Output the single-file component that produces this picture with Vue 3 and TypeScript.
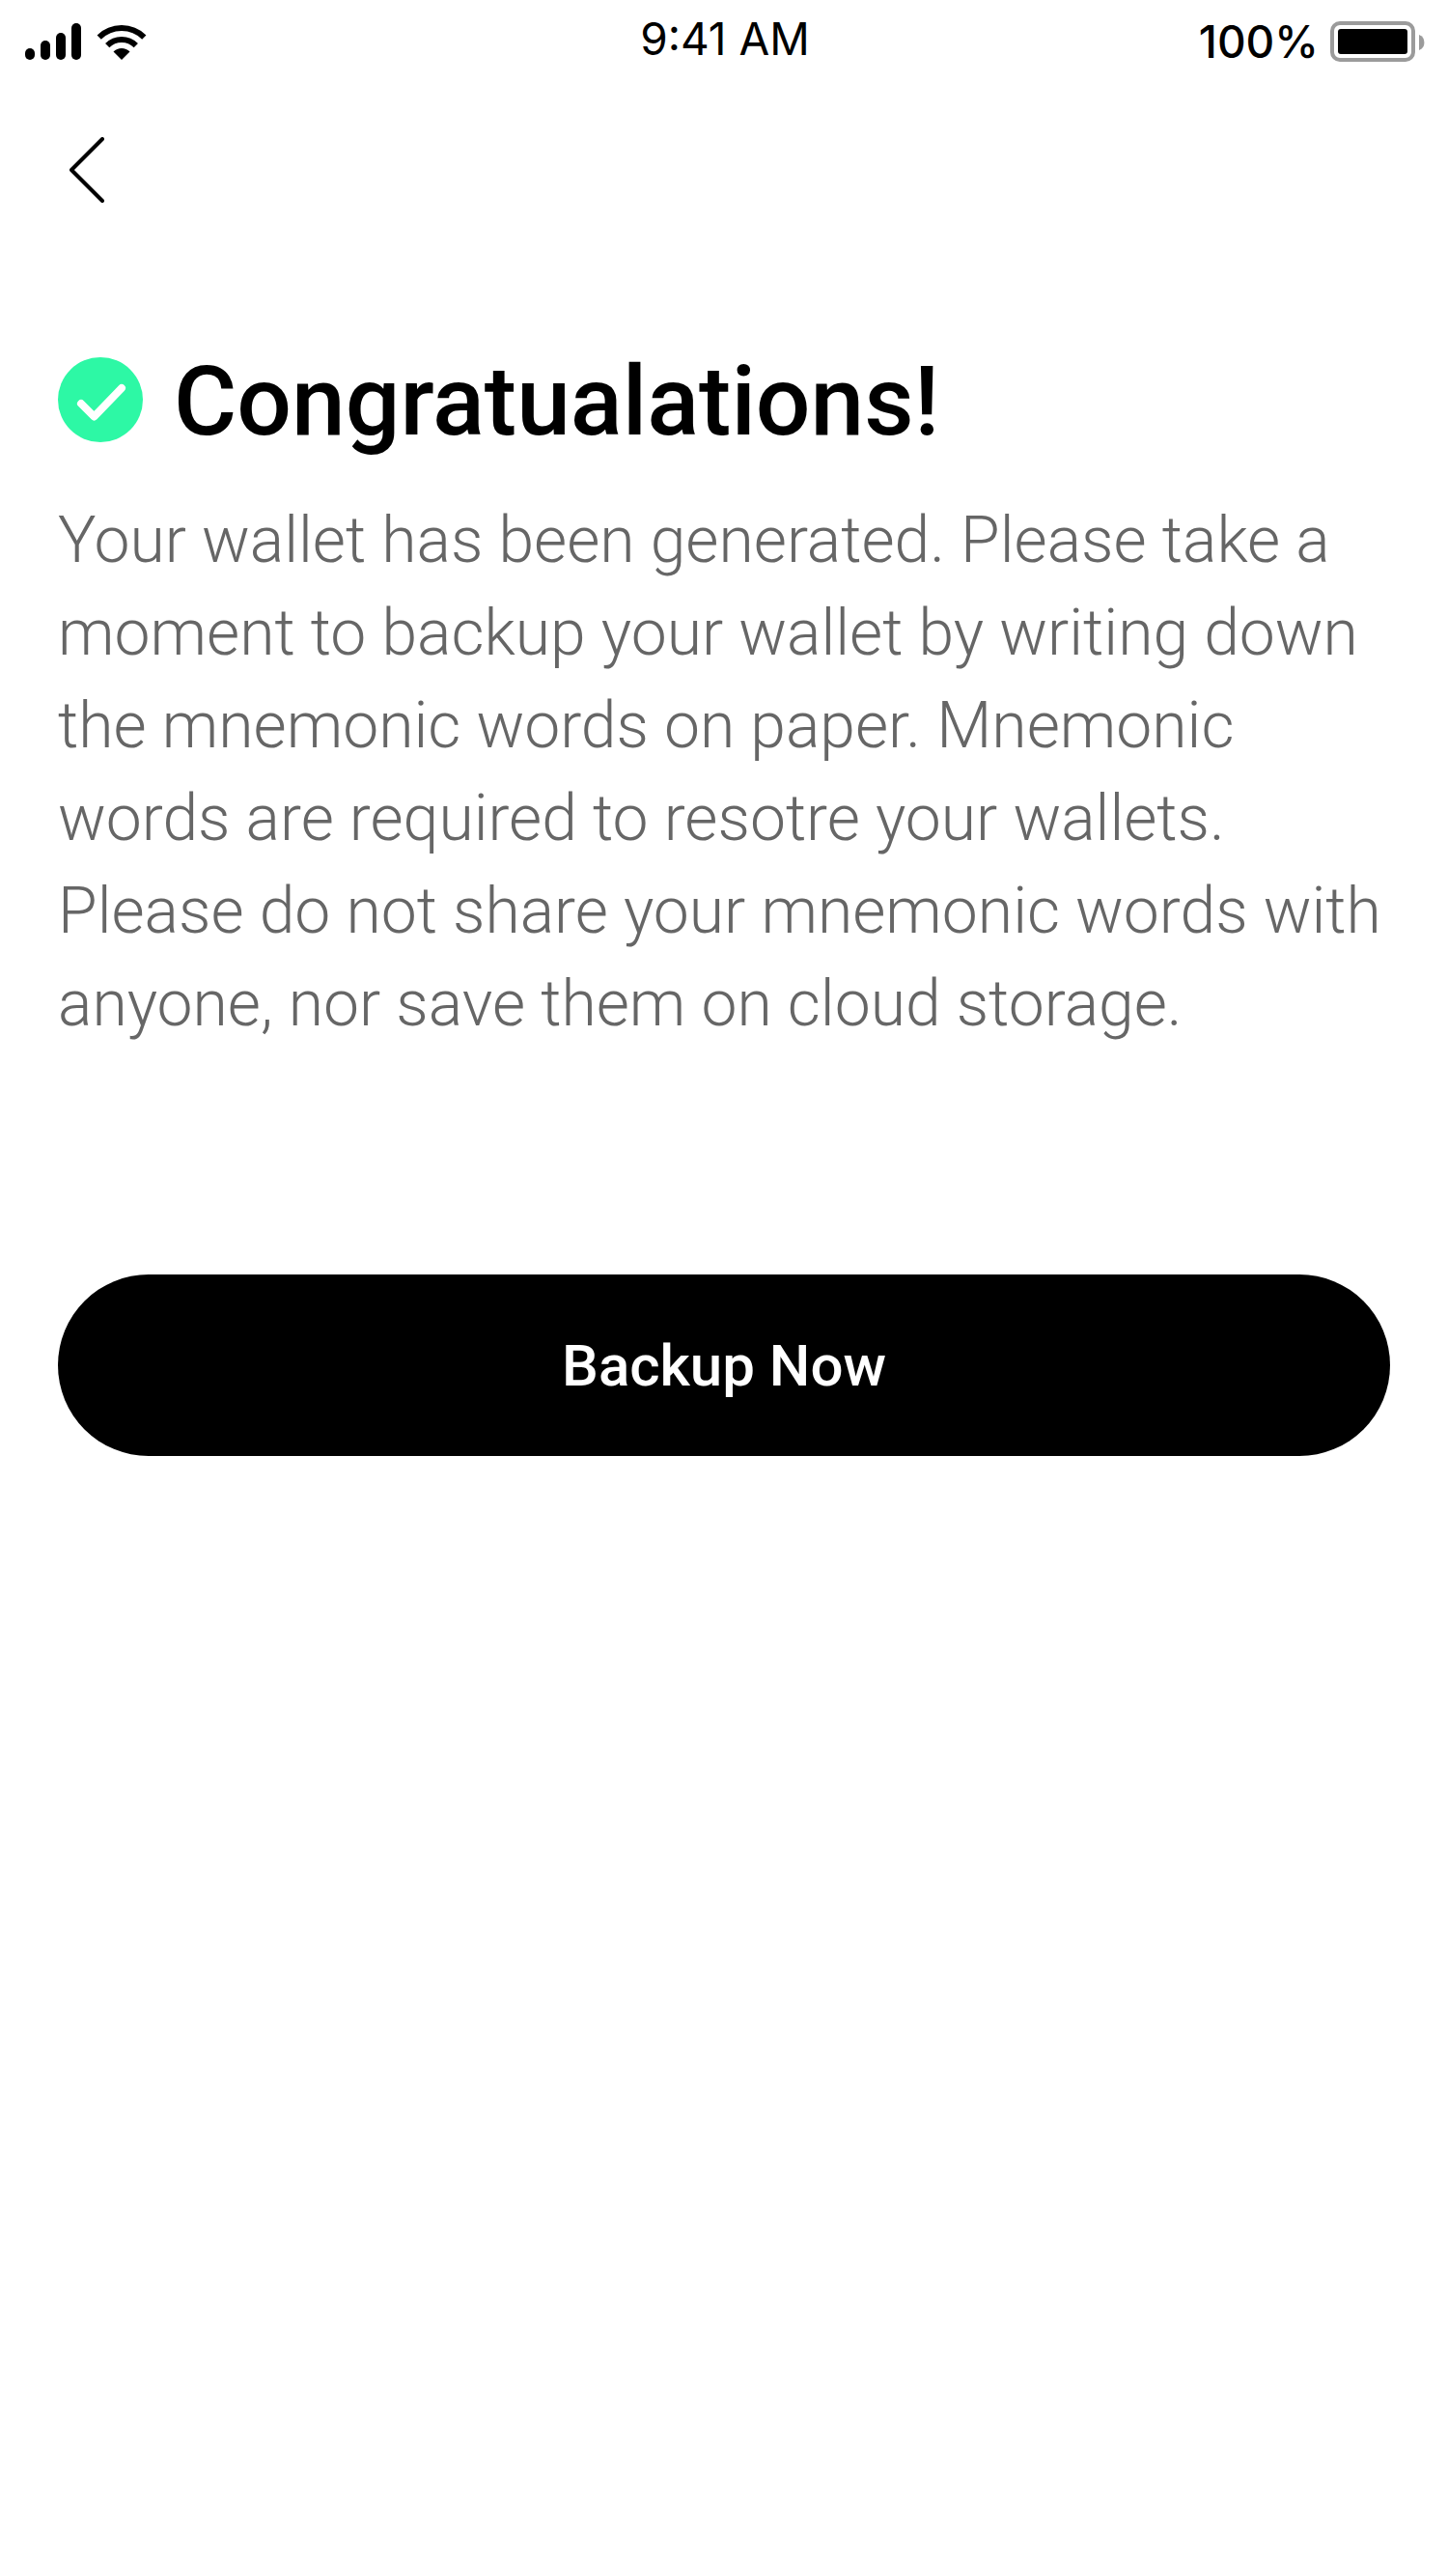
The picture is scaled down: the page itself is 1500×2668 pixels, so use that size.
<script setup lang="ts">
interface Bar {
  x: number
  top: number
}

const time = '9:41 AM'
const charge = '100%'
const signalBars: Bar[] = [
  { x: 0, top: 26 },
  { x: 16, top: 18 },
  { x: 32, top: 10 },
  { x: 48, top: 0 },
]

function goBack(): void {
  window.history.back()
}
</script>

<template>
  <div class="screen">
    <div class="status">
      <div class="status-left">
        <svg width="58" height="38" viewBox="0 0 58 38" role="img" aria-label="Signal">
          <rect v-for="bar in signalBars" :key="bar.x" :x="bar.x" :y="bar.top" width="10" :height="38 - bar.top" rx="5" />
        </svg>
        <svg width="52" height="38" viewBox="0 0 52 38" role="img" aria-label="Wi-Fi">
          <path d="M2.7 14.7a33 33 0 0 1 46.6 0M11.2 23.2a21 21 0 0 1 29.6 0" fill="none" stroke="#000" stroke-width="6" />
          <path d="M26 38l-8.5-8.5a12 12 0 0 1 17 0z" />
        </svg>
      </div>
      <time class="time">{{ time }}</time>
      <div class="status-right">
        <span>{{ charge }}</span>
        <svg width="98" height="42" viewBox="0 0 98 42" role="img" aria-label="Battery">
          <rect x="2" y="2" width="84" height="38" rx="8" fill="none" stroke="#9b9b9b" stroke-width="4" />
          <rect x="8" y="8" width="72" height="26" rx="3" />
          <path d="M92 14a8.6 8.6 0 0 1 0 16z" fill="#9b9b9b" />
        </svg>
      </div>
    </div>

    <header class="nav">
      <button class="back" type="button" aria-label="Back" @click="goBack">
        <svg width="36" height="68" viewBox="0 0 36 68">
          <path d="M34 2L2 34l32 32" fill="none" stroke="#000" stroke-width="4" stroke-linecap="round" stroke-linejoin="round" />
        </svg>
      </button>
    </header>

    <main class="content">
      <div class="title-row">
        <svg width="88" height="88" viewBox="0 0 88 88" aria-hidden="true">
          <circle cx="44" cy="44" r="44" fill="#2df8a5" />
          <path d="M24 48l13.500 13.500L66 32" fill="none" stroke="#fff" stroke-width="8" stroke-linecap="round" stroke-linejoin="round" />
        </svg>
        <h1>Congratualations!</h1>
      </div>
      <p>
        Your wallet has been generated. Please take a moment to backup your wallet by writing down
        the mnemonic words on paper. Mnemonic words are required to resotre your wallets. Please do
        not share your mnemonic words with anyone, nor save them on cloud storage.
      </p>
      <button class="primary" type="button">Backup Now</button>
    </main>
  </div>
</template>

<style>
body {
  background: #fff;
}
</style>

<style scoped>
.screen {
  color: #000;
  font-family: Roboto, "Liberation Sans", sans-serif;
}

svg {
  display: block;
  flex: none;
}

.status {
  display: grid;
  grid-template-columns: 1fr auto 1fr;
  align-items: center;
  height: 80px;
  padding: 0 24px 0 26px;
  font: 400 46px/48px Inter, "Liberation Sans", sans-serif;
}

.status-left {
  display: flex;
  gap: 16px;
  padding-top: 6px;
}

.status-right {
  display: flex;
  align-items: center;
  justify-content: flex-end;
  gap: 12px;
  padding-top: 6px;
  font-weight: 500;
}

.nav {
  padding: 62px 72px 0;
}

.back {
  display: block;
  padding: 0;
  border: 0;
  background: none;
  cursor: pointer;
}

.content {
  padding: 140px 60px 0;
}

.title-row {
  display: flex;
  align-items: center;
  gap: 32px;
}

h1 {
  margin: 0;
  padding-top: 4px;
  font-size: 100px;
  font-weight: 500;
  line-height: 124px;
}

p {
  margin: 34px 0 0;
  color: #666;
  font-size: 66px;
  font-weight: 300;
  line-height: 96px;
}

.primary {
  display: block;
  width: 100%;
  height: 188px;
  margin-top: 232px;
  padding: 0;
  border: 0;
  border-radius: 94px;
  background: #000;
  color: #fff;
  font: inherit;
  font-size: 60px;
  font-weight: 500;
  cursor: pointer;
}
</style>
